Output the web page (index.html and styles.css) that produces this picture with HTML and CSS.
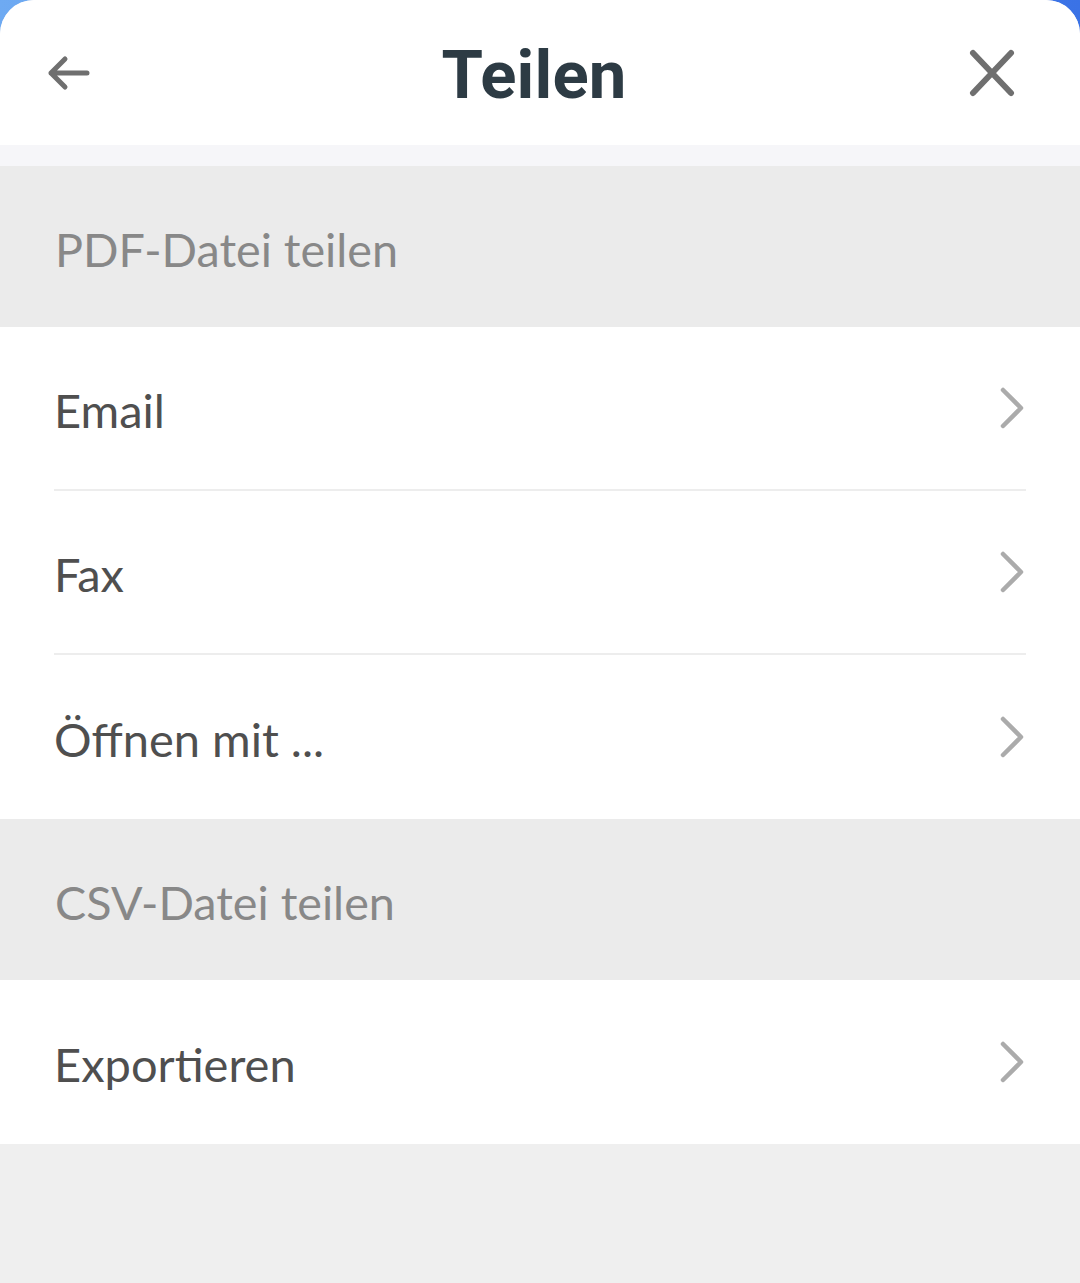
FILE: index.html
```html
<!DOCTYPE html>
<html lang="de">
<head>
    <meta charset="UTF-8">
    <meta name="viewport" content="width=device-width, initial-scale=1.0">
    <title>Teilen</title>
    <link rel="stylesheet" href="styles.css">
</head>
<body>

    <div class="sheet">

        <!-- Header -->
        <header class="sheet-header">
            <button class="icon-btn" aria-label="Zurück">
                <svg width="48" height="48" viewBox="0 0 48 48">
                    <path d="M43 24H7M21 10L7 24l14 14" fill="none" stroke="#6f6f6f" stroke-width="5" stroke-linecap="round" stroke-linejoin="round"/>
                </svg>
            </button>
            <h1>Teilen</h1>
            <button class="icon-btn" aria-label="Schließen">
                <svg width="48" height="48" viewBox="0 0 48 48">
                    <path d="M5 4l38 40M43 4L5 44" fill="none" stroke="#6f6f6f" stroke-width="6" stroke-linecap="round"/>
                </svg>
            </button>
        </header>

        <div class="spacer"></div>

        <!-- PDF -->
        <div class="section-title">PDF-Datei teilen</div>
        <ul class="list">
            <li class="list-item">
                <span>Email</span>
                <svg class="chevron" width="30" height="44" viewBox="0 0 30 44"><path d="M4 4l18 18L4 40" fill="none" stroke="#ababab" stroke-width="4.5" stroke-linecap="round" stroke-linejoin="round"/></svg>
            </li>
            <li class="list-item">
                <span>Fax</span>
                <svg class="chevron" width="30" height="44" viewBox="0 0 30 44"><path d="M4 4l18 18L4 40" fill="none" stroke="#ababab" stroke-width="4.5" stroke-linecap="round" stroke-linejoin="round"/></svg>
            </li>
            <li class="list-item">
                <span>Öffnen mit ...</span>
                <svg class="chevron" width="30" height="44" viewBox="0 0 30 44"><path d="M4 4l18 18L4 40" fill="none" stroke="#ababab" stroke-width="4.5" stroke-linecap="round" stroke-linejoin="round"/></svg>
            </li>
        </ul>

        <!-- CSV -->
        <div class="section-title">CSV-Datei teilen</div>
        <ul class="list">
            <li class="list-item">
                <span>Exportieren</span>
                <svg class="chevron" width="30" height="44" viewBox="0 0 30 44"><path d="M4 4l18 18L4 40" fill="none" stroke="#ababab" stroke-width="4.5" stroke-linecap="round" stroke-linejoin="round"/></svg>
            </li>
        </ul>

        <div class="filler"></div>
    </div>

</body>
</html>
```

FILE: styles.css
```css
html, body {
    height: 100%;
}

body {
    margin: 0;
    padding: 0;
    background: linear-gradient(90deg, #6eaaf2, #3a72e6);
    font-family: 'Lato', 'Noto Sans', sans-serif;
}

.sheet {
    min-height: 100%;
    display: flex;
    flex-direction: column;
    background-color: #efefef;
    border-radius: 34px 34px 0 0;
    overflow: hidden;
}

/* Header */
.sheet-header {
    height: 145px;
    background-color: #fff;
    display: flex;
    align-items: center;
    justify-content: space-between;
    padding: 0 64px 0 44px;
}

.sheet-header h1 {
    margin: 0 0 0 8px;
    font-family: 'Roboto', sans-serif;
    font-weight: 700;
    font-size: 67px;
    color: #2d3b44;
    letter-spacing: 0.2px;
    padding-top: 4px;
}

.icon-btn {
    background: transparent;
    border: none;
    padding: 0;
    width: 48px;
    height: 48px;
    display: flex;
}

.spacer {
    height: 21px;
    background-color: #f6f6f9;
}

/* Sections */
.section-title {
    height: 161px;
    background-color: #ebebeb;
    color: #888;
    font-size: 46.7px;
    display: flex;
    align-items: center;
    padding: 4px 0 0 55px;
    box-sizing: border-box;
}

.list {
    list-style: none;
    margin: 0;
    padding: 0;
    background-color: #fff;
}

.list-item {
    height: 164px;
    margin: 0 54px;
    display: flex;
    align-items: center;
    justify-content: space-between;
    font-size: 47px;
    color: #4f4f4f;
    border-bottom: 2px solid #ededed;
    box-sizing: border-box;
    padding-top: 4px;
}

.list-item:last-child {
    border-bottom: none;
}

.chevron {
    margin-right: -3px;
    margin-top: -4px;
}

.filler {
    flex: 1;
    background-color: #efefef;
}
```
